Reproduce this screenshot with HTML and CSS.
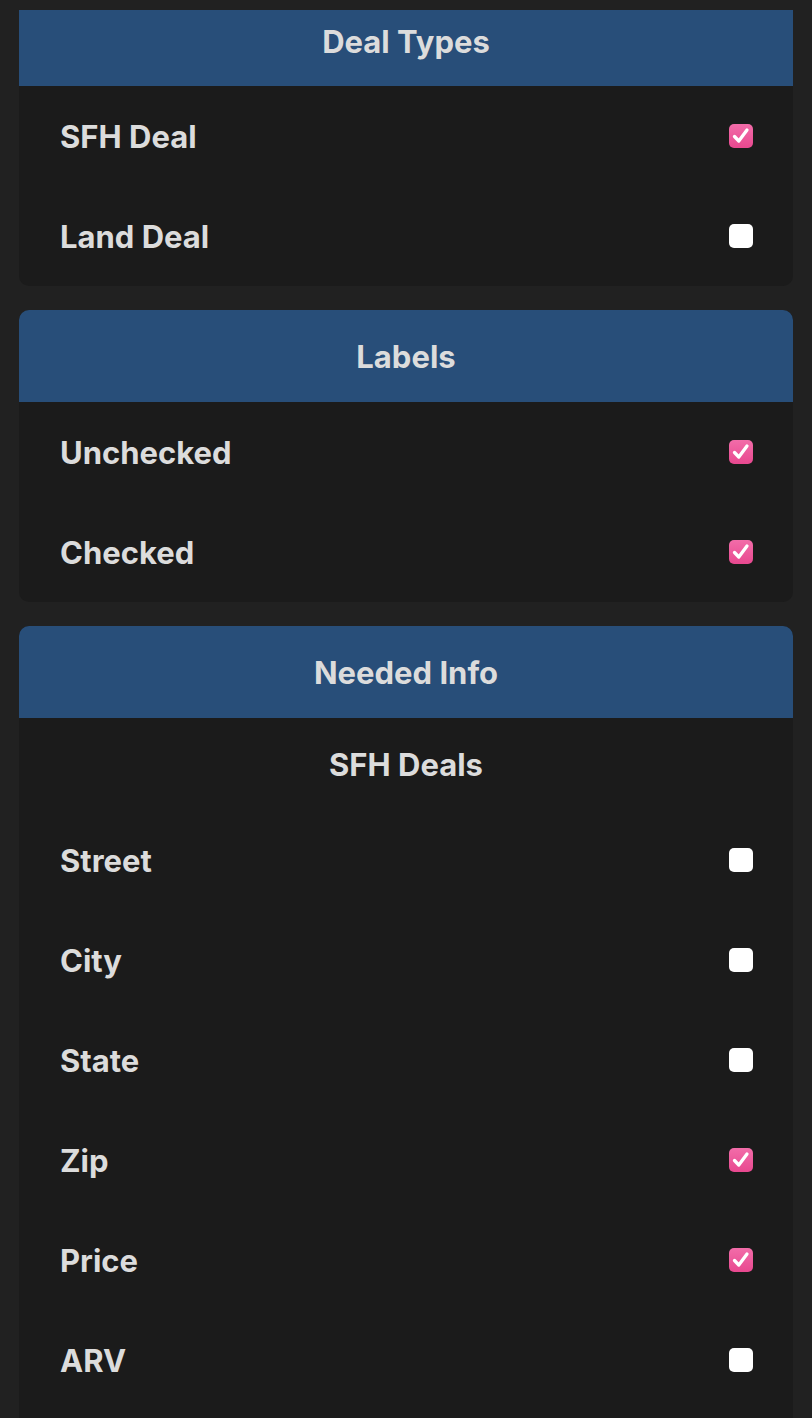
FILE: index.html
```html
<!DOCTYPE html>
<html lang="en">

<head>
    <meta charset="UTF-8">
    <meta name="viewport" content="width=device-width, initial-scale=1.0">
    <title>Settings</title>
    <link rel="stylesheet" href="styles.css">
</head>

<body>
    <div class="main">

        <div class="card cut">
            <div class="head">Deal Types</div>
            <div class="row">
                <span>SFH Deal</span>
                <span class="box on"><svg viewBox="0 0 24 24"><path d="M5.5 12.5 L9.8 17 L18 6"/></svg></span>
            </div>
            <div class="row">
                <span>Land Deal</span>
                <span class="box"></span>
            </div>
        </div>

        <div class="card">
            <div class="head">Labels</div>
            <div class="row">
                <span>Unchecked</span>
                <span class="box on"><svg viewBox="0 0 24 24"><path d="M5.5 12.5 L9.8 17 L18 6"/></svg></span>
            </div>
            <div class="row">
                <span>Checked</span>
                <span class="box on"><svg viewBox="0 0 24 24"><path d="M5.5 12.5 L9.8 17 L18 6"/></svg></span>
            </div>
        </div>

        <div class="card long">
            <div class="head">Needed Info</div>
            <div class="sub">SFH Deals</div>
            <div class="row">
                <span>Street</span>
                <span class="box"></span>
            </div>
            <div class="row">
                <span>City</span>
                <span class="box"></span>
            </div>
            <div class="row">
                <span>State</span>
                <span class="box"></span>
            </div>
            <div class="row">
                <span>Zip</span>
                <span class="box on"><svg viewBox="0 0 24 24"><path d="M5.5 12.5 L9.8 17 L18 6"/></svg></span>
            </div>
            <div class="row">
                <span>Price</span>
                <span class="box on"><svg viewBox="0 0 24 24"><path d="M5.5 12.5 L9.8 17 L18 6"/></svg></span>
            </div>
            <div class="row">
                <span>ARV</span>
                <span class="box"></span>
            </div>
        </div>

    </div>
</body>

</html>
```

FILE: styles.css
```css
body {
    margin: 0;
    background-color: #212121;
    font-family: Inter, "Noto Sans", sans-serif;
    color: #dcdcdc;
}

.main {
    display: flex;
    flex-direction: column;
    gap: 24px;
    padding: 10px 19px 0 19px;
}

.card {
    background-color: #1b1b1b;
    border-radius: 10px;
    overflow: hidden;
}

.head {
    height: 92px;
    display: flex;
    justify-content: center;
    align-items: center;
    background-color: #284e79;
    font-size: 31px;
    font-weight: 700;
}

.cut {
    border-top-left-radius: 0;
    border-top-right-radius: 0;
}

.cut .head {
    height: 76px;
    padding-bottom: 14px;
    box-sizing: border-box;
}

.sub {
    height: 92px;
    display: flex;
    justify-content: center;
    align-items: center;
    font-size: 31px;
    font-weight: 700;
}

.row {
    height: 100px;
    display: flex;
    justify-content: space-between;
    align-items: center;
    padding: 0 40px 0 41px;
    font-size: 31px;
    font-weight: 700;
}

.long {
    padding-bottom: 30px;
}

.box {
    width: 24px;
    height: 24px;
    border-radius: 5px;
    background-color: #ffffff;
    display: flex;
}

.box.on {
    background: linear-gradient(#f26ca9, #e8488f);
}

.box svg {
    width: 24px;
    height: 24px;
    fill: none;
    stroke: #ffffff;
    stroke-width: 3.3;
    stroke-linecap: round;
    stroke-linejoin: round;
}
```
